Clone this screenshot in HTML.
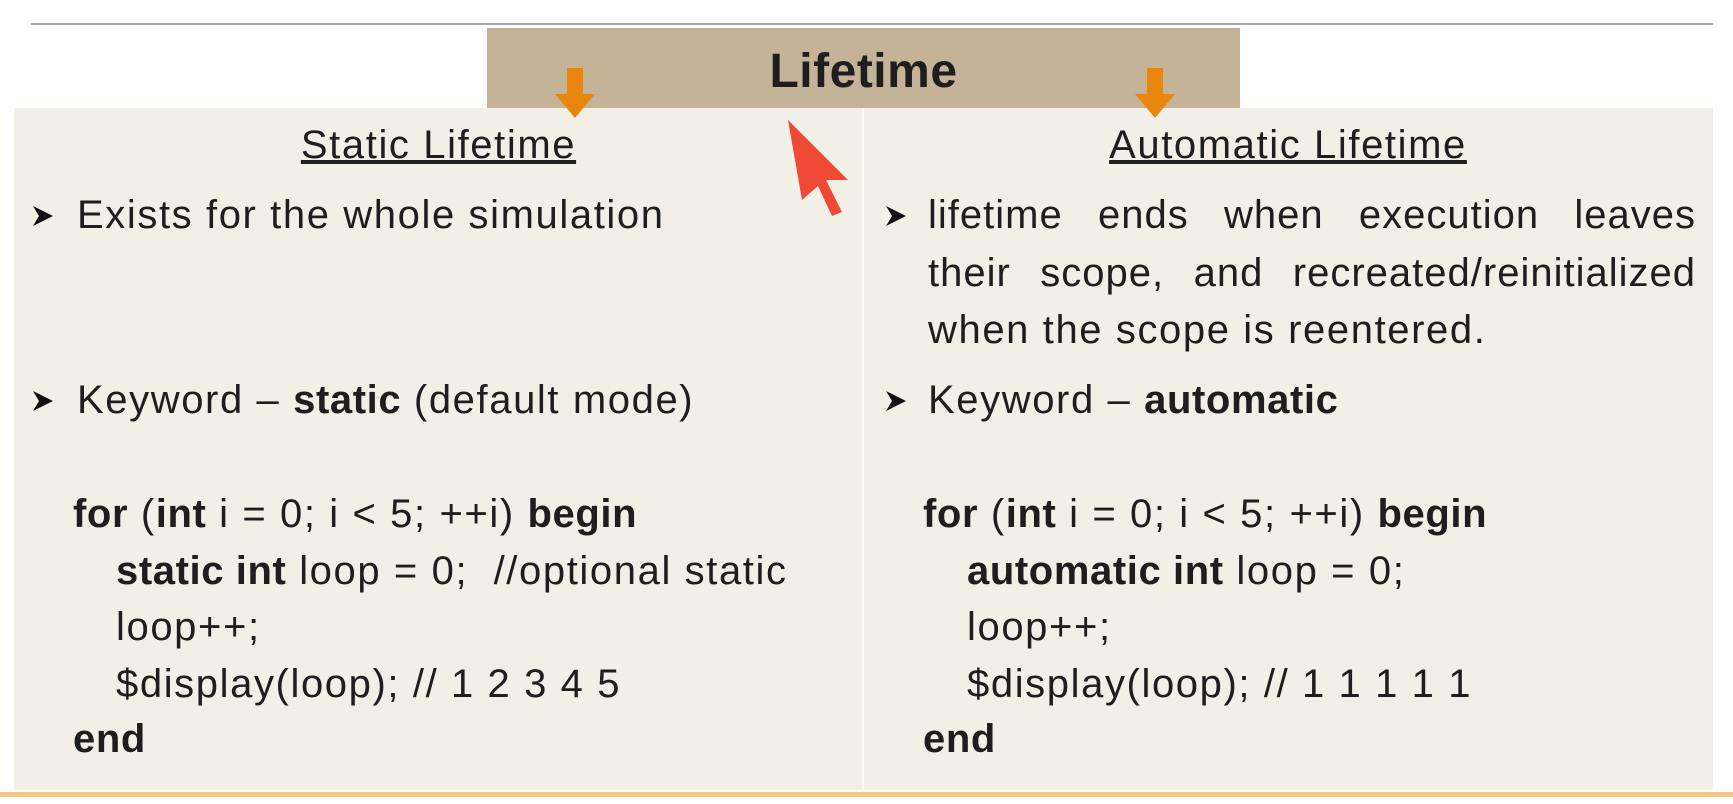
<!DOCTYPE html>
<html><head><meta charset="utf-8"><style>
html,body{margin:0;padding:0;width:1733px;height:804px;overflow:hidden;background:#fff;position:relative;font-family:"Liberation Sans",Arial,sans-serif;color:#1e1e1e}
.a{position:absolute;white-space:nowrap;font-size:40px;line-height:44px;letter-spacing:1.6px}
b{font-weight:bold;letter-spacing:0.6px}
.bul{position:absolute;width:22px;height:22px}
</style></head><body>
<div style="position:absolute;left:31px;top:23px;width:1682px;height:2px;background:#a8a8a8"></div>
<div style="position:absolute;left:14px;top:108px;width:1699px;height:682px;background:#f1efe6"></div>
<div style="position:absolute;left:862px;top:108px;width:2px;height:682px;background:#fbfaf6"></div>
<div style="position:absolute;left:0;top:792px;width:1733px;height:5px;background:#f6c57e"></div>
<div style="position:absolute;left:487px;top:28px;width:753px;height:80px;background:#c4b396"></div>
<div class="a" style="left:487px;width:753px;text-align:center;top:47px;font-size:48px;font-weight:bold;line-height:50px;letter-spacing:0.5px">Lifetime</div>
<svg style="position:absolute;left:553px;top:68px" width="44" height="52"><path d="M14 0h16v26h12L22 50 2 26h12z" fill="#e8860e"/></svg>
<svg style="position:absolute;left:1133px;top:68px" width="44" height="52"><path d="M14 0h16v26h12L22 50 2 26h12z" fill="#e8860e"/></svg>
<svg style="position:absolute;left:782px;top:118px" width="70" height="100"><path d="M6 2 L66 62 L44 62 L60 94 L50 98 L36 68 L20 82 Z" fill="#f04a36"/></svg>

<div class="a" style="left:14px;width:849px;text-align:center;top:123px;text-decoration:underline">Static Lifetime</div>
<div class="a" style="left:863px;width:850px;text-align:center;top:123px;text-decoration:underline">Automatic Lifetime</div>

<svg class="bul" style="left:32px;top:205px" viewBox="0 0 22 22"><path d="M1 1 L21 11 L1 21 L7 11 Z" fill="#111"/></svg>
<div class="a" style="left:77px;top:193px">Exists for the whole simulation</div>
<svg class="bul" style="left:32px;top:390px" viewBox="0 0 22 22"><path d="M1 1 L21 11 L1 21 L7 11 Z" fill="#111"/></svg>
<div class="a" style="left:77px;top:378px">Keyword – <b>static</b> (default mode)</div>
<div class="a" style="left:73px;top:492px"><b>for</b> (<b>int</b> i = 0; i &lt; 5; ++i) <b>begin</b></div>
<div class="a" style="left:116px;top:549px"><b>static int</b> loop = 0;&nbsp; //optional static</div>
<div class="a" style="left:116px;top:605px">loop++;</div>
<div class="a" style="left:116px;top:662px">$display(loop); // 1 2 3 4 5</div>
<div class="a" style="left:73px;top:717px"><b>end</b></div>

<svg class="bul" style="left:885px;top:205px" viewBox="0 0 22 22"><path d="M1 1 L21 11 L1 21 L7 11 Z" fill="#111"/></svg>
<div class="a" style="left:928px;top:193px;width:768px;display:flex;justify-content:space-between;letter-spacing:1px"><span>lifetime</span><span>ends</span><span>when</span><span>execution</span><span>leaves</span></div>
<div class="a" style="left:928px;top:251px;width:768px;display:flex;justify-content:space-between;letter-spacing:1px"><span>their</span><span>scope,</span><span>and</span><span>recreated/reinitialized</span></div>
<div class="a" style="left:928px;top:308px">when the scope is reentered.</div>
<svg class="bul" style="left:885px;top:390px" viewBox="0 0 22 22"><path d="M1 1 L21 11 L1 21 L7 11 Z" fill="#111"/></svg>
<div class="a" style="left:928px;top:378px">Keyword – <b>automatic</b></div>
<div class="a" style="left:923px;top:492px"><b>for</b> (<b>int</b> i = 0; i &lt; 5; ++i) <b>begin</b></div>
<div class="a" style="left:967px;top:549px"><b>automatic int</b> loop = 0;</div>
<div class="a" style="left:967px;top:605px">loop++;</div>
<div class="a" style="left:967px;top:662px">$display(loop); // 1 1 1 1 1</div>
<div class="a" style="left:923px;top:717px"><b>end</b></div>
</body></html>
